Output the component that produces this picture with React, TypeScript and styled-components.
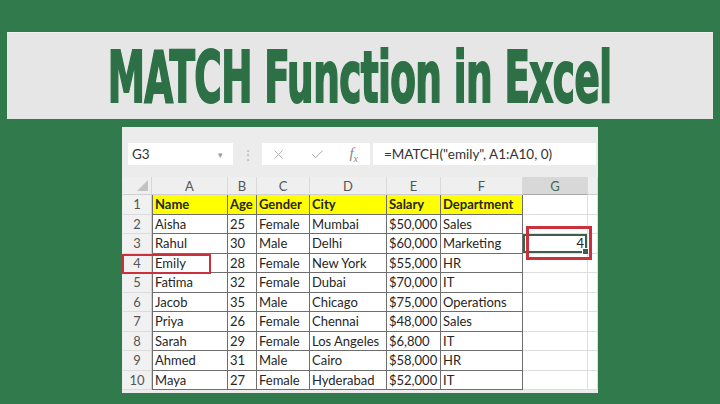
import styled, { createGlobalStyle } from "styled-components";
import { X, Check } from "lucide-react";

const GlobalStyle = createGlobalStyle`
  html, body {
    margin: 0;
    padding: 0;
    background: #317a4c;
  }
  body {
    font-family: Lato, "Liberation Sans", sans-serif;
  }
`;

const columns = ["A", "B", "C", "D", "E", "F", "G"];

const rows = [
  ["Name", "Age", "Gender", "City", "Salary", "Department"],
  ["Aisha", "25", "Female", "Mumbai", "$50,000", "Sales"],
  ["Rahul", "30", "Male", "Delhi", "$60,000", "Marketing"],
  ["Emily", "28", "Female", "New York", "$55,000", "HR"],
  ["Fatima", "32", "Female", "Dubai", "$70,000", "IT"],
  ["Jacob", "35", "Male", "Chicago", "$75,000", "Operations"],
  ["Priya", "26", "Female", "Chennai", "$48,000", "Sales"],
  ["Sarah", "29", "Female", "Los Angeles", "$6,800", "IT"],
  ["Ahmed", "31", "Male", "Cairo", "$58,000", "HR"],
  ["Maya", "27", "Female", "Hyderabad", "$52,000", "IT"],
];

export default function App() {
  return (
    <>
      <GlobalStyle />
      <Page>
        <Banner>
          <Title>MATCH Function in Excel</Title>
        </Banner>
        <Window>
          <FormulaBar>
            <NameBox>
              <span>G3</span>
              <Caret>▾</Caret>
            </NameBox>
            <Grip>⋮</Grip>
            <ButtonsBox>
              <X size={15} strokeWidth={1.4} color="#a9a9a9" />
              <Check size={15} strokeWidth={1.6} color="#a9a9a9" />
              <Fx>
                f<sub>x</sub>
              </Fx>
            </ButtonsBox>
            <FormulaInput>=MATCH("emily", A1:A10, 0)</FormulaInput>
          </FormulaBar>

          <Sheet>
            <Corner />
            {columns.map((c) => (
              <ColHeader key={c} $active={c === "G"}>
                {c}
              </ColHeader>
            ))}
            <ColHeader />

            {rows.map((row, r) => (
              <Row key={r} row={row} index={r} />
            ))}

            <RedBox style={{ left: -1, top: 77, width: 89, height: 20 }} $w={2} />
            <RedBox style={{ left: 403, top: 49, width: 66, height: 34 }} $w={3} />
          </Sheet>
        </Window>
      </Page>
    </>
  );
}

function Row({ row, index }: { row: string[]; index: number }) {
  const isHead = index === 0;
  return (
    <>
      <RowHeader>{index + 1}</RowHeader>
      {row.map((text, c) => (
        <Cell
          key={c}
          $table
          $first={c === 0}
          $yellow={isHead}
          $bold={isHead}
        >
          {text}
        </Cell>
      ))}
      {index === 2 ? (
        <Cell $right $selected>
          4
          <FillHandle />
        </Cell>
      ) : (
        <Cell />
      )}
      <Cell />
    </>
  );
}

const Page = styled.div`
  width: 720px;
  height: 404px;
  overflow: hidden;
  display: flex;
  flex-direction: column;
  padding-top: 32px;
  box-sizing: border-box;
`;

const Banner = styled.div`
  margin: 0 7px;
  height: 87px;
  background: #e5e6e5;
  border-top: 1px solid #eef0ee;
  display: flex;
  align-items: center;
  justify-content: center;
  overflow: visible;
  box-sizing: border-box;
`;

const Title = styled.h1`
  margin: 3px 0 0;
  flex: none;
  font-family: "DejaVu Sans Condensed", "DejaVu Sans", sans-serif;
  font-weight: 700;
  font-size: 71px;
  line-height: 1;
  letter-spacing: -1px;
  color: #2d7046;
  -webkit-text-stroke: 2px #2d7046;
  white-space: nowrap;
  transform: scaleX(0.585);
  transform-origin: center;
`;

const Window = styled.div`
  margin: 8px 0 0 122px;
  width: 476px;
  height: 266px;
  background: #ececec;
  padding-top: 16px;
  box-sizing: border-box;
  display: flex;
  flex-direction: column;
`;

const FormulaBar = styled.div`
  display: flex;
  align-items: stretch;
  height: 22px;
  padding-left: 6px;
  margin-bottom: 12px;
`;

const NameBox = styled.div`
  width: 105px;
  background: #fff;
  display: flex;
  align-items: center;
  justify-content: space-between;
  padding: 0 10px 0 4px;
  box-sizing: border-box;
  font-size: 13.5px;
  color: #333;
`;

const Caret = styled.span`
  font-size: 9px;
  color: #9a9a9a;
`;

const Grip = styled.div`
  width: 29px;
  display: flex;
  align-items: center;
  justify-content: center;
  color: #b9b9b9;
  font-size: 14px;
`;

const ButtonsBox = styled.div`
  width: 108px;
  background: #fff;
  display: flex;
  align-items: center;
  justify-content: space-between;
  padding: 0 12px 0 9px;
  box-sizing: border-box;
`;

const Fx = styled.span`
  font-family: "Liberation Serif", serif;
  font-style: italic;
  font-size: 15px;
  color: #888;
  sub {
    font-size: 10px;
  }
`;

const FormulaInput = styled.div`
  flex: 1;
  margin-left: 3px;
  margin-right: 2px;
  background: #fff;
  display: flex;
  align-items: center;
  padding-left: 11px;
  font-size: 13.5px;
  color: #333;
`;

const Sheet = styled.div`
  position: relative;
  margin-left: 1px;
  display: grid;
  grid-template-columns: 29px 76px 29px 53px 77px 54px 82px 65px 1fr;
  grid-template-rows: 18px repeat(10, 19.5px);
  background: #fff;
`;

const Corner = styled.div`
  background: #efefef;
  border-right: 1px solid #d6d6d6;
  border-bottom: 1px solid #d0d0d0;
  position: relative;
  &::after {
    content: "";
    position: absolute;
    right: 3px;
    bottom: 3px;
    width: 11px;
    height: 11px;
    background: #c2c2c2;
    clip-path: polygon(100% 0, 100% 100%, 0 100%);
  }
`;

const ColHeader = styled.div<{ $active?: boolean }>`
  background: ${(p) => (p.$active ? "#d8d8d8" : "#efefef")};
  border-right: 1px solid #dadada;
  border-bottom: 1px solid ${(p) => (p.$active ? "#a8a8a8" : "#d0d0d0")};
  display: flex;
  align-items: center;
  justify-content: center;
  font-size: 13px;
  color: ${(p) => (p.$active ? "#3d6a50" : "#555")};
`;

const RowHeader = styled.div`
  background: #f1f1f1;
  border-right: 1px solid #cfcfcf;
  border-bottom: 1px solid #dcdcdc;
  display: flex;
  align-items: center;
  justify-content: center;
  font-size: 13px;
  color: #555;
`;

const Cell = styled.div<{
  $table?: boolean;
  $first?: boolean;
  $yellow?: boolean;
  $bold?: boolean;
  $right?: boolean;
  $selected?: boolean;
}>`
  position: relative;
  box-sizing: border-box;
  display: flex;
  align-items: center;
  justify-content: ${(p) => (p.$right ? "flex-end" : "flex-start")};
  padding: 0 3px 0 2px;
  white-space: nowrap;
  font-size: 13px;
  font-weight: ${(p) => (p.$bold ? 700 : 400)};
  color: #262626;
  background: ${(p) => (p.$yellow ? "#ffff00" : "#fff")};
  border-right: 1px solid ${(p) => (p.$table ? "#6e6e6e" : "#dedede")};
  border-bottom: 1px solid ${(p) => (p.$table ? "#6e6e6e" : "#dedede")};
  border-left: ${(p) => (p.$first ? "1px solid #6e6e6e" : "none")};
  box-shadow: ${(p) => (p.$selected ? "inset 0 0 0 2px #3e5f4a" : "none")};
`;

const FillHandle = styled.span`
  position: absolute;
  right: -2px;
  bottom: -2px;
  width: 5px;
  height: 5px;
  background: #3e5f4a;
  border: 1px solid #fff;
`;

const RedBox = styled.div<{ $w: number }>`
  position: absolute;
  box-sizing: border-box;
  border: ${(p) => p.$w}px solid #c9313d;
  pointer-events: none;
`;
